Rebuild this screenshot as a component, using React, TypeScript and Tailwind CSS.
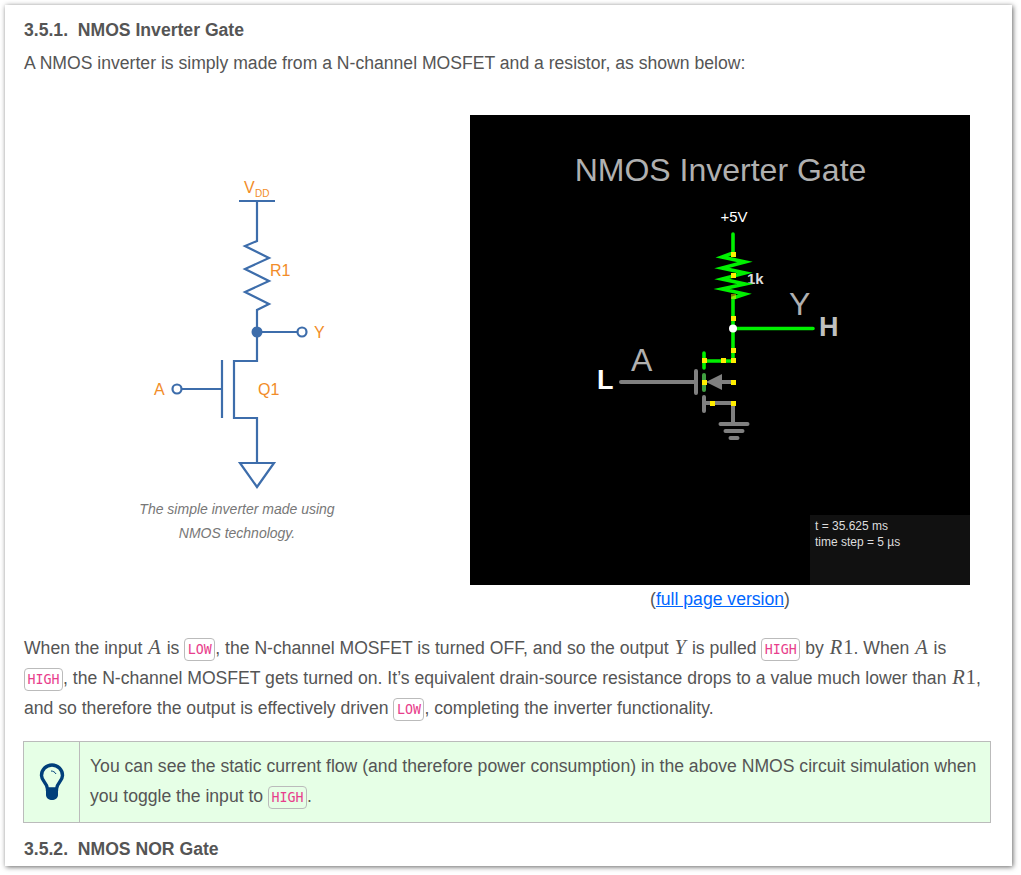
const sans = { fontFamily: '"Liberation Sans", Arial, sans-serif' }

const Code = ({ children }: { children: string }) => (
  <code className="rounded-[4px] border border-[#bbb] px-[2.500px] py-[3px] font-['DejaVu_Sans_Mono',monospace] text-[13.300px] leading-none text-[#e83e8c]">
    {children}
  </code>
)

const MathVar = ({ children }: { children: string }) => (
  <span className="px-[1px] font-['Liberation_Serif',serif] text-[20.500px] italic leading-none">{children}</span>
)

const MathNum = ({ children }: { children: string }) => (
  <span className="font-['Liberation_Serif',serif] text-[20.500px] leading-none">{children}</span>
)

const SchematicFigure = () => (
  <svg width="220" height="325" viewBox="130 170 220 325" className="block">
    <g fill="none" stroke="#3d6dab" strokeWidth="2.200">
      <path d="M239 201H275M257 201V241L245 246L269 258L245 269L269 281L245 292L269 304L257 310V361H234V418H257V463" />
      <path d="M257 332H297.500" />
      <circle cx="302" cy="332" r="4.500" fill="#fff" />
      <path d="M222 360V418M222 389H182" />
      <circle cx="177" cy="389" r="4.500" fill="#fff" />
      <path d="M240 463H274L257 487Z" />
    </g>
    <circle cx="257" cy="332" r="5.500" fill="#3d6dab" />
    <g fill="#f28c28" fontFamily="Liberation Sans, Arial, sans-serif" fontSize="16">
      <text x="244" y="193">V</text>
      <text x="255" y="197" fontSize="10">DD</text>
      <text x="270" y="276">R1</text>
      <text x="314" y="338">Y</text>
      <text x="154" y="395">A</text>
      <text x="258" y="395">Q1</text>
    </g>
  </svg>
)

const SimCircuit = () => (
  <svg width="500" height="470" viewBox="470 115 500 470" className="block">
    <g fontFamily="Liberation Sans, Arial, sans-serif">
      <text x="720.500" y="181" textAnchor="middle" fontSize="32" fill="#b0b0b0">NMOS Inverter Gate</text>
      <text x="734" y="222" textAnchor="middle" fontSize="15" fill="#fff">+5V</text>
      <text x="747" y="284" fontSize="15" fontWeight="bold" fill="#ddd">1k</text>
      <text x="789" y="315" fontSize="32" fill="#b0b0b0">Y</text>
      <text x="819" y="336" fontSize="27" fontWeight="bold" fill="#c0c0c0">H</text>
      <text x="597" y="389" fontSize="27" fontWeight="bold" fill="#fff">L</text>
      <text x="631" y="371" fontSize="32" fill="#b0b0b0">A</text>
    </g>
    <g fill="none" strokeLinecap="round">
      <g stroke="#808080" strokeWidth="4">
        <path d="M621 382H696M696 371V393M704 397V411M704 403H733V424M720 382H733M720.500 424H747.500M725.500 431H742.500M730.500 438H737.500" />
      </g>
      <path d="M704 375V390" stroke="#40a040" strokeWidth="4" />
      <g stroke="#00f000" strokeWidth="3.600" strokeMiterlimit="12">
        <path d="M733 234V253L722 257L745 262L722 268L745 273L722 279L745 284L722 289L745 294L733 298V361H704M704 353V368M733 328.500H813" />
      </g>
    </g>
    <path d="M706 382L722 374V390Z" fill="#808080" />
    <circle cx="733" cy="328.500" r="4" fill="#fff" />
    <g fill="#ffee00">
      <rect x="731" y="252" width="5" height="5" />
      <rect x="731" y="273" width="5" height="5" />
      <rect x="731" y="294" width="5" height="5" fillOpacity="0.5" />
      <rect x="731" y="316" width="5" height="5" />
      <rect x="731" y="348" width="5" height="5" />
      <rect x="702" y="358" width="5" height="5" />
      <rect x="721" y="358" width="5" height="5" />
      <rect x="731" y="358" width="5" height="5" />
      <rect x="702" y="380" width="5" height="5" />
      <rect x="731" y="380" width="5" height="5" />
      <rect x="710" y="401" width="5" height="5" />
      <rect x="731" y="401" width="5" height="5" />
    </g>
  </svg>
)

const BulbIcon = () => (
  <svg width="28" height="40" viewBox="37 762 28 40">
    <path
      d="M46.500 789C46.500 783 40.500 781.500 40.500 775.500A10.500 10.500 0 0 1 61.500 775.500C61.500 781.500 55.500 783 55.500 789Z"
      fill="none"
      stroke="#003f7a"
      strokeWidth="3.400"
    />
    <path d="M45 788H57V795C57 798 54 800 51 800C48 800 45 798 45 795Z" fill="#003f7a" />
    <path d="M50 771C52 771 54 772 55 774" fill="none" stroke="#003f7a" strokeWidth="1" />
  </svg>
)

export default function App() {
  return (
    <div className="h-[875px] overflow-hidden bg-white pl-[5px] pr-2 pt-[5px] text-[17.600px] leading-[30px] text-[#555]" style={sans}>
      <div className="h-[861px] w-[1007px] bg-white pl-[19px] pr-[21px] pt-[10px] shadow-[1px_1px_5px_#666]">
        <h4 className="text-[17.600px] font-bold leading-[30px]">3.5.1.&nbsp; NMOS Inverter Gate</h4>
        <p className="mt-[3px]">A NMOS inverter is simply made from a N-channel MOSFET and a resistor, as shown below:</p>

        <div className="mt-[37px] flex">
          <figure className="w-[426px] pt-[55px]">
            <div className="flex justify-center pl-[6px]">
              <SchematicFigure />
            </div>
            <figcaption className="mx-auto mt-[2px] w-[240px] text-center text-[14px] italic leading-[24px] text-[#777]">
              The simple inverter made using NMOS technology.
            </figcaption>
          </figure>

          <div className="ml-[20px] w-[500px]">
            <div className="relative h-[470px] bg-black">
              <SimCircuit />
              <div className="absolute bottom-0 right-0 h-[70px] w-[160px] bg-[#111] px-[5px] pt-[3px] text-[12px] leading-[16px] text-[#ddd]">
                t = 35.625 ms
                <br />
                time step = 5 µs
              </div>
            </div>
            <p className="mt-[-1px] text-center">
              (<a href="#" className="text-[#0066ff] underline">full page version</a>)
            </p>
          </div>
        </div>

        <p className="mt-[19px]">
          When the input <MathVar>A</MathVar> is <Code>LOW</Code>, the N-channel MOSFET is turned OFF, and so the output <MathVar>Y</MathVar> is pulled <Code>HIGH</Code> by <MathVar>R</MathVar><MathNum>1</MathNum>. When <MathVar>A</MathVar> is <Code>HIGH</Code>, the N-channel MOSFET gets turned on. It’s equivalent drain-source resistance drops to a value much lower than <MathVar>R</MathVar><MathNum>1</MathNum>, and so therefore the output is effectively driven <Code>LOW</Code>, completing the inverter functionality.
        </p>

        <div className="ml-[-1px] mt-[18px] flex h-[82px] w-[968px] border border-[#bbb] bg-[#e6ffe6]">
          <div className="flex w-[56px] shrink-0 items-center justify-center border-r border-[#bbb]">
            <BulbIcon />
          </div>
          <p className="px-[10px] py-[9px]">
            You can see the static current flow (and therefore power consumption) in the above NMOS circuit simulation when you toggle the input to <Code>HIGH</Code>.
          </p>
        </div>

        <h4 className="mt-[11px] text-[17.600px] font-bold leading-[30px]">3.5.2.&nbsp; NMOS NOR Gate</h4>
      </div>
    </div>
  )
}
